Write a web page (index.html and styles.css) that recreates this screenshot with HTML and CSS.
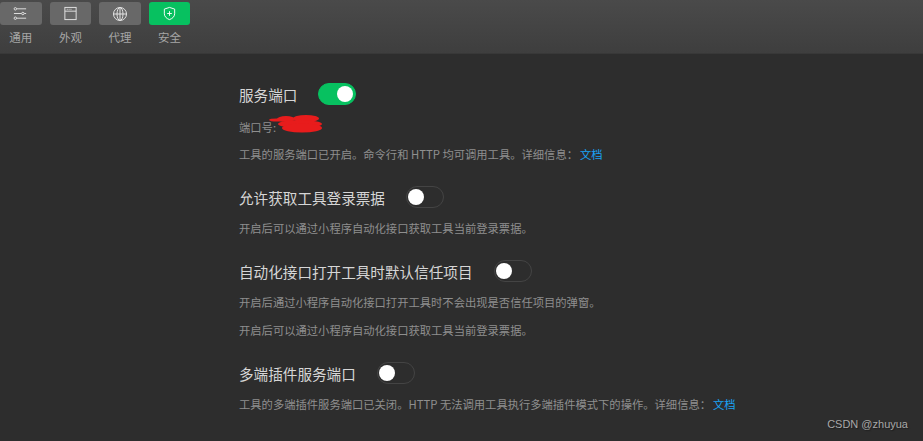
FILE: index.html
```html
<!DOCTYPE html>
<html lang="zh-CN">
<head>
  <meta charset="UTF-8" />
  <title>设置</title>
  <link rel="stylesheet" href="styles.css">
</head>
<body>
  <div class="toolbar">
    <div class="tab">
      <div class="tab-btn">
        <svg viewBox="0 0 16 16" width="15" height="15" fill="none" stroke="#e4e4e4" stroke-width="1">
          <path d="M4 3h10M1 8h8M12 8h2M4 13h10" />
          <circle cx="2.5" cy="3" r="1.3" /><circle cx="10.5" cy="8" r="1.3" /><circle cx="2.5" cy="13" r="1.3" />
        </svg>
      </div>
      <span>通用</span>
    </div>
    <div class="tab">
      <div class="tab-btn">
        <svg viewBox="0 0 16 16" width="15" height="15" fill="none" stroke="#e4e4e4" stroke-width="1">
          <rect x="2" y="1.5" width="12" height="13" />
          <path d="M2 5.5h12" />
          <path d="M4 3.5h1M6 3.5h1M8 3.5h1" />
        </svg>
      </div>
      <span>外观</span>
    </div>
    <div class="tab">
      <div class="tab-btn">
        <svg viewBox="0 0 16 16" width="16" height="16" fill="none" stroke="#e4e4e4" stroke-width="1">
          <circle cx="8" cy="8" r="6.5" />
          <ellipse cx="8" cy="8" rx="3" ry="6.5" />
          <path d="M8 1.5v13M1.5 8h13" />
        </svg>
      </div>
      <span>代理</span>
    </div>
    <div class="tab">
      <div class="tab-btn tab-active">
        <svg viewBox="0 0 16 16" width="15" height="15" fill="none" stroke="#fff" stroke-width="1">
          <path d="M8 1.5l5.5 1.8v5c0 3-2.5 5.2-5.5 6.2-3-1-5.5-3.2-5.5-6.2v-5z" />
          <path d="M8 5.5v5M5.5 8h5" />
        </svg>
      </div>
      <span>安全</span>
    </div>
  </div>

  <div class="content">
    <div class="title-row">
      <span class="title">服务端口</span>
      <span class="switch on"></span>
    </div>
    <div class="port-row">
      <span class="desc">端口号:</span>
      <svg class="scribble" viewBox="0 0 53 19" width="53" height="19" fill="#e81c1c">
        <ellipse cx="8" cy="6" rx="8" ry="1.6" />
        <ellipse cx="17" cy="5" rx="9" ry="3" />
        <ellipse cx="37" cy="4.5" rx="13" ry="3.5" />
        <ellipse cx="31" cy="10" rx="22" ry="4" />
        <ellipse cx="33" cy="14" rx="20" ry="4.5" />
      </svg>
    </div>
    <p class="desc">工具的服务端口已开启。命令行和 HTTP 均可调用工具。详细信息：<a class="link">文档</a></p>

    <div class="title-row">
      <span class="title">允许获取工具登录票据</span>
      <span class="switch"></span>
    </div>
    <p class="desc">开启后可以通过小程序自动化接口获取工具当前登录票据。</p>

    <div class="title-row">
      <span class="title">自动化接口打开工具时默认信任项目</span>
      <span class="switch"></span>
    </div>
    <p class="desc">开启后通过小程序自动化接口打开工具时不会出现是否信任项目的弹窗。</p>
    <p class="desc">开启后可以通过小程序自动化接口获取工具当前登录票据。</p>

    <div class="title-row">
      <span class="title">多端插件服务端口</span>
      <span class="switch"></span>
    </div>
    <p class="desc">工具的多端插件服务端口已关闭。HTTP 无法调用工具执行多端插件模式下的操作。详细信息：<a class="link">文档</a></p>
  </div>

  <div class="watermark">CSDN @zhuyua</div>
</body>
</html>
```

FILE: styles.css
```css
html, body {
  margin: 0;
  height: 100%;
}

body {
  position: relative;
  height: 441px;
  overflow: hidden;
  background: #2d2d2d;
  font-family: "Noto Sans CJK SC", "Liberation Sans", sans-serif;
}

.toolbar {
  display: flex;
  gap: 8px;
  height: 54px;
  padding-top: 2px;
  box-sizing: border-box;
  background: linear-gradient(#4a4a4a, #3e3e3e);
  border-bottom: 1px solid #383838;
}

.tab {
  width: 41.6px;
  display: flex;
  flex-direction: column;
  align-items: center;
  color: #a6a6a6;
  font-size: 11.5px;
}

.tab span {
  margin-top: 4px;
  line-height: 16px;
}

.tab-btn {
  width: 100%;
  height: 23px;
  display: flex;
  align-items: center;
  justify-content: center;
  background: #686868;
  border-radius: 3px;
}

.tab-active {
  background: #07c160;
}

.content {
  padding: 26px 0 0 239px;
}

.title-row {
  display: flex;
  align-items: center;
  height: 28px;
  margin-top: 21px;
}

.title-row:first-child {
  margin-top: 0;
}

.title {
  color: #d6d6d6;
  font-size: 14.6px;
}

.switch {
  position: relative;
  width: 38px;
  height: 22px;
  margin-left: 21px;
  box-sizing: border-box;
  border: 1px solid #444;
  border-radius: 11px;
  background: #2d2d2d;
}

.switch::after {
  content: "";
  position: absolute;
  top: 2px;
  left: 1px;
  width: 16px;
  height: 16px;
  border-radius: 50%;
  background: #fff;
}

.switch.on {
  background: #07c160;
  border-color: #07c160;
}

.switch.on::after {
  left: 18px;
}

.desc {
  margin: 0;
  color: #8f8f8f;
  font-size: 11.3px;
  line-height: 16px;
}

p.desc {
  margin-top: 9px;
}

p.desc + p.desc {
  margin-top: 12px;
}

.port-row + p.desc {
  margin-top: 11px;
}

.port-row {
  display: flex;
  align-items: center;
  height: 16px;
  margin-top: 11px;
}

.scribble {
  margin-left: -7px;
  margin-top: -7px;
}

.link {
  color: #1aa3f5;
  margin-left: 2px;
}

.watermark {
  position: absolute;
  right: 15px;
  bottom: 11px;
  color: #a8a8a8;
  font-family: "Liberation Sans", sans-serif;
  font-size: 11px;
  text-shadow: 1px 1px 1px #1c1c1c;
}
```
